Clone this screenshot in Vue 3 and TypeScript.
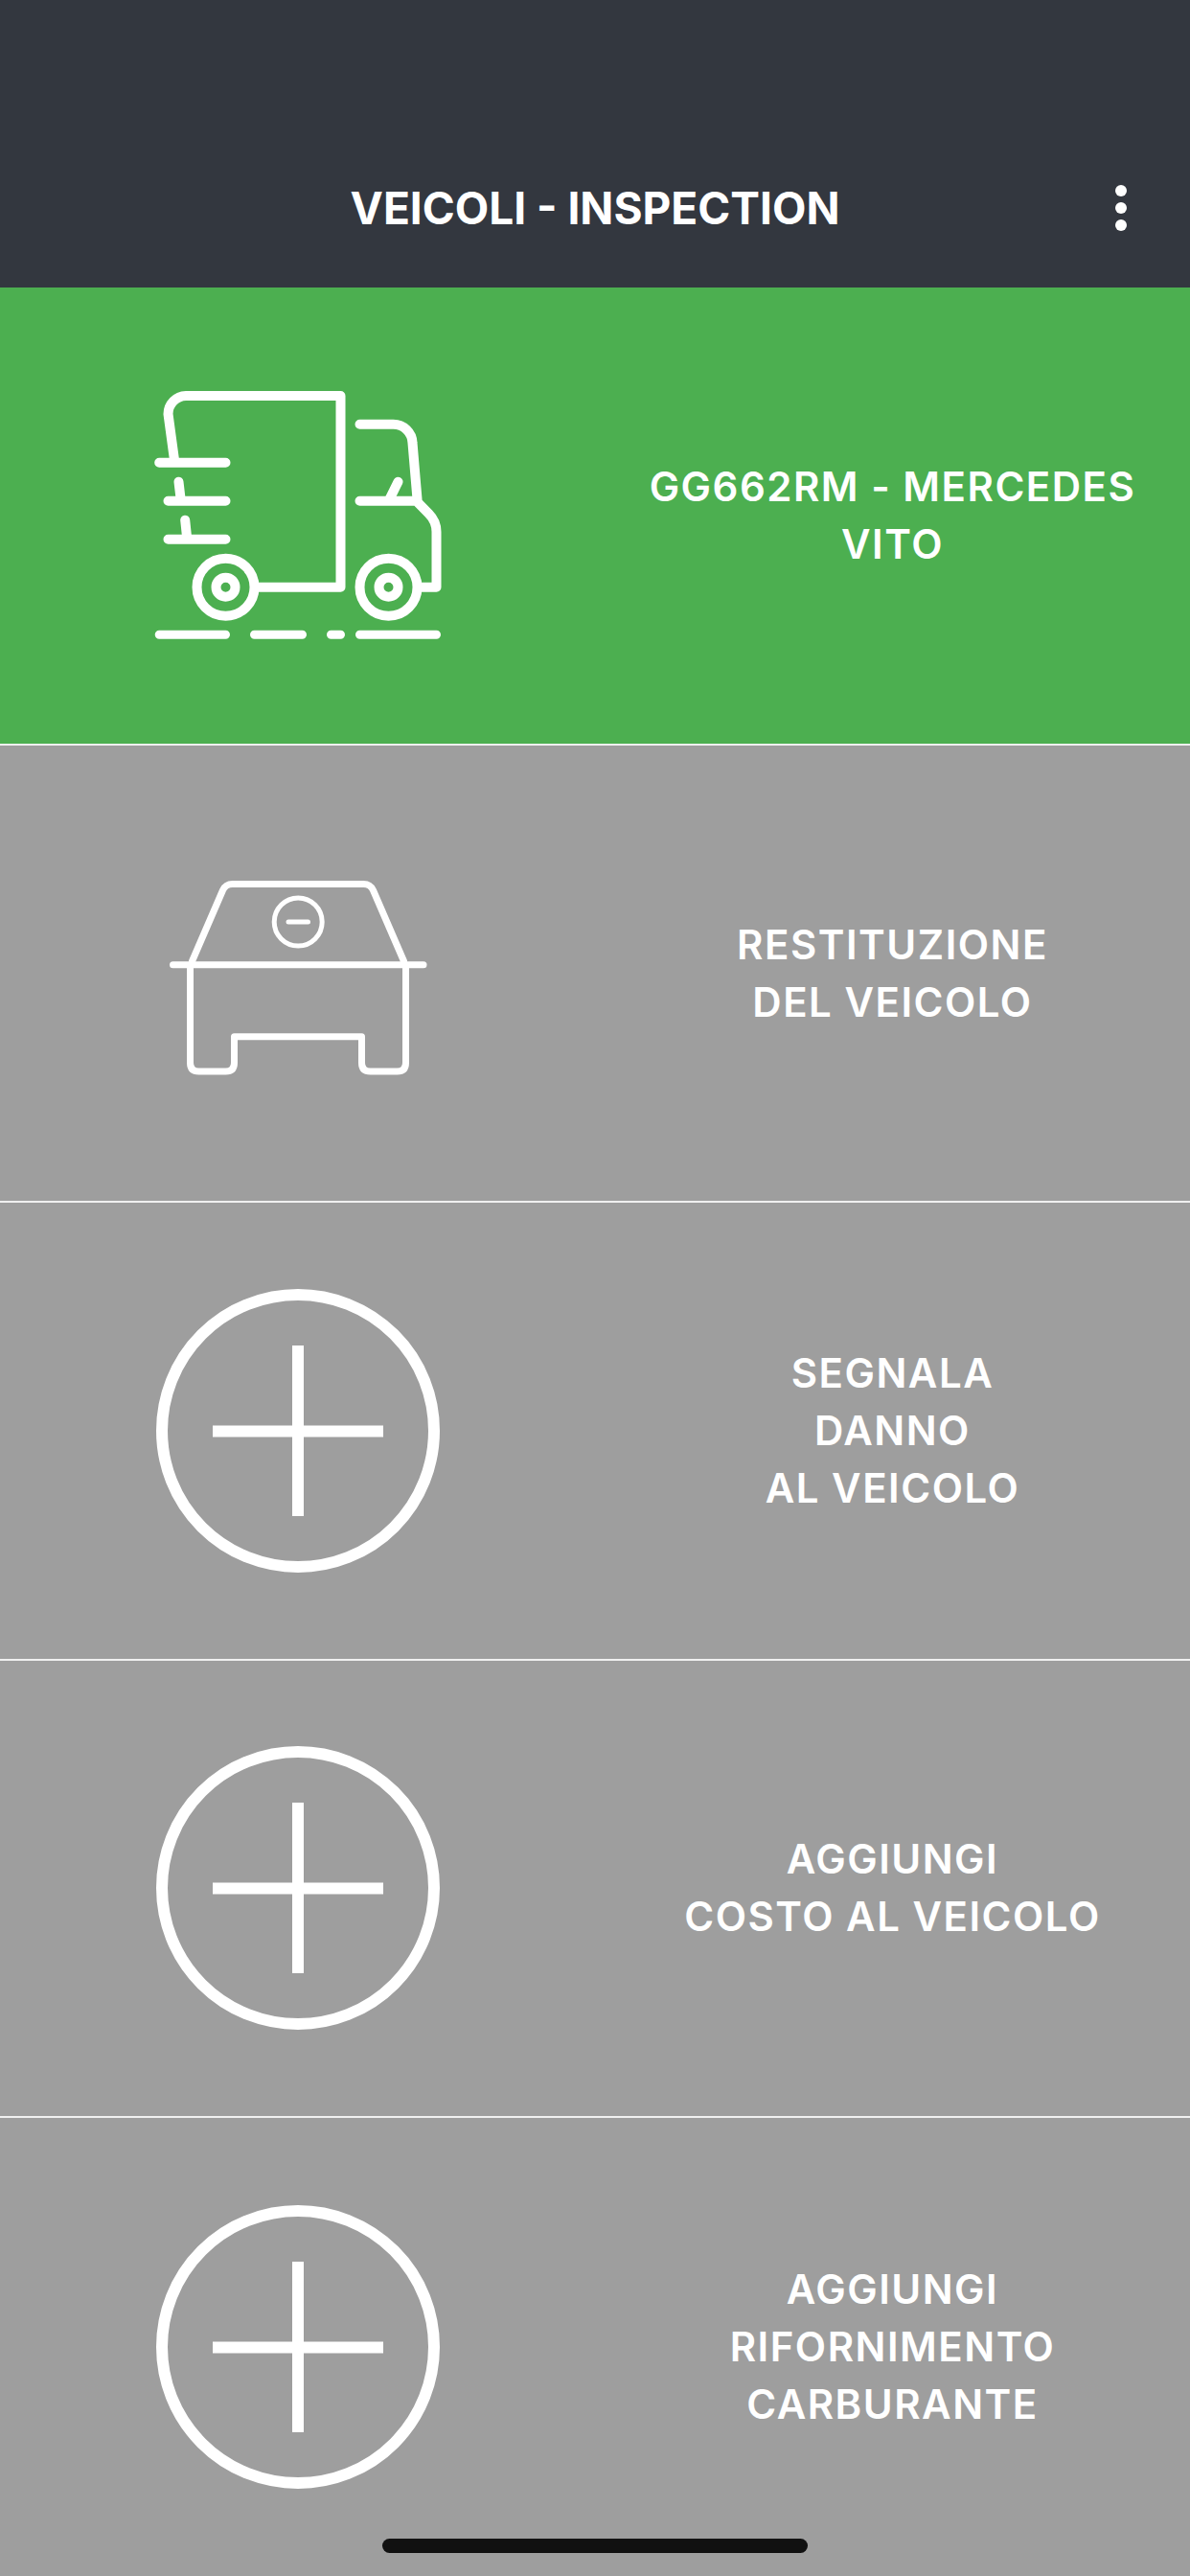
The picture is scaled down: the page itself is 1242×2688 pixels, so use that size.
<template>
  <div class="screen">
    <header class="topbar">
      <span></span>
      <h1 class="title">VEICOLI - INSPECTION</h1>
      <button class="menu-btn" aria-label="menu">
        <i></i><i></i><i></i>
      </button>
    </header>

    <div v-for="item in items" :key="item.id" class="row" :class="{ active: item.active }">
      <div class="row-icon">
        <svg v-if="item.icon === 'truck'" class="truck" viewBox="0.5 3 360 310" fill="none" stroke="#fff" stroke-width="10" stroke-linecap="round" stroke-linejoin="round">
          <path d="M51.500 100 L45 52 A19 19 0 0 1 63.500 33 H225 V232.700 H138" />
          <path d="M35.700 102.700 H105 M45 142.700 H105 M45 182.700 H105" />
          <path d="M56 122.700 L58 140 M62.700 162.700 L64.500 180" />
          <path d="M245 62.700 H280 A20 20 0 0 1 300 82 L305 141" />
          <path d="M245 142.700 H304 L317 156 Q325 164 325 175 V232.700 H308" />
          <path d="M285 122.700 L276 141" />
          <circle cx="105" cy="232.700" r="30" />
          <circle cx="105" cy="232.700" r="10" />
          <circle cx="275" cy="232.700" r="30" />
          <circle cx="275" cy="232.700" r="10" />
          <path d="M35.700 282.300 H105 M135 282.300 H185 M215 282.300 H225 M245 282.300 H325" stroke-width="9" />
        </svg>
        <svg v-else-if="item.icon === 'car'" class="car" viewBox="0.5 -4 320 260" fill="none" stroke="#fff" stroke-width="7" stroke-linecap="round" stroke-linejoin="round">
          <path d="M30 116.700 H291.500" />
          <path d="M50 113 L82 39 Q85 32.500 92 32.500 H229 Q236 32.500 239 39 L271 113" />
          <path d="M48 117 V219 Q48 228 57 228 H85 Q94 228 94 219 V191.700 H227 V219 Q227 228 236 228 H264 Q273 228 273 219 V117" />
          <circle cx="160.700" cy="72" r="25" stroke-width="5" />
          <path d="M150.500 72 H171" stroke-width="5" />
        </svg>
        <svg v-else class="plus" viewBox="0 0 300 300" fill="none" stroke="#fff" stroke-width="12">
          <circle cx="150" cy="150" r="142" />
          <path d="M61 150.500 H239 M150 61 V239" />
        </svg>
      </div>
      <div class="row-label">
        <template v-for="(line, i) in item.lines" :key="i">
          <br v-if="i > 0" />{{ line }}
        </template>
      </div>
    </div>

    <div class="home-indicator"></div>
  </div>
</template>

<script setup lang="ts">
interface MenuItem {
  id: number
  icon: 'truck' | 'car' | 'plus'
  lines: string[]
  active?: boolean
}

const items: MenuItem[] = [
  { id: 1, icon: 'truck', lines: ['GG662RM - MERCEDES VITO'], active: true },
  { id: 2, icon: 'car', lines: ['RESTITUZIONE', 'DEL VEICOLO'] },
  { id: 3, icon: 'plus', lines: ['SEGNALA', 'DANNO', 'AL VEICOLO'] },
  { id: 4, icon: 'plus', lines: ['AGGIUNGI', 'COSTO AL VEICOLO'] },
  { id: 5, icon: 'plus', lines: ['AGGIUNGI', 'RIFORNIMENTO', 'CARBURANTE'] }
]
</script>

<style>
body {
  background: #9e9e9e;
}
</style>

<style scoped>
.screen {
  position: relative;
  width: 1242px;
  height: 2688px;
  overflow: hidden;
  background: #9e9e9e;
  font-family: Inter, "Liberation Sans", sans-serif;
  color: #fff;
}

.topbar {
  display: grid;
  grid-template-columns: 1fr auto 1fr;
  align-items: center;
  height: 300px;
  box-sizing: border-box;
  padding: 134px 0 0;
  background: #33373f;
}

.title {
  margin: 0;
  font-size: 46px;
  font-weight: 700;
  line-height: 56px;
}

.menu-btn {
  justify-self: end;
  display: flex;
  flex-direction: column;
  gap: 6px;
  margin-right: 66px;
  padding: 0;
  border: none;
  background: none;
}

.menu-btn i {
  display: block;
  width: 12px;
  height: 12px;
  border-radius: 50%;
  background: #fff;
}

.row {
  display: grid;
  grid-template-columns: 1fr 1fr;
  align-items: center;
  height: 477.33px;
  box-sizing: border-box;
  border-bottom: 2px solid #f0f0f0;
  background: #9e9e9e;
}

.row:nth-last-child(2) {
  border-bottom: none;
}

.row.active {
  height: 478px;
  background: #4caf50;
}

.row-icon {
  display: flex;
  justify-content: center;
}

.truck {
  width: 360px;
  height: 310px;
}

.car {
  width: 320px;
  height: 260px;
}

.plus {
  width: 300px;
  height: 300px;
}

.row-label {
  padding: 0 30px;
  font-size: 42px;
  font-weight: 600;
  line-height: 60px;
  letter-spacing: 1.5px;
  text-align: center;
}

.home-indicator {
  position: absolute;
  left: 399px;
  bottom: 24px;
  width: 444px;
  height: 15px;
  border-radius: 8px;
  background: #111;
}
</style>
